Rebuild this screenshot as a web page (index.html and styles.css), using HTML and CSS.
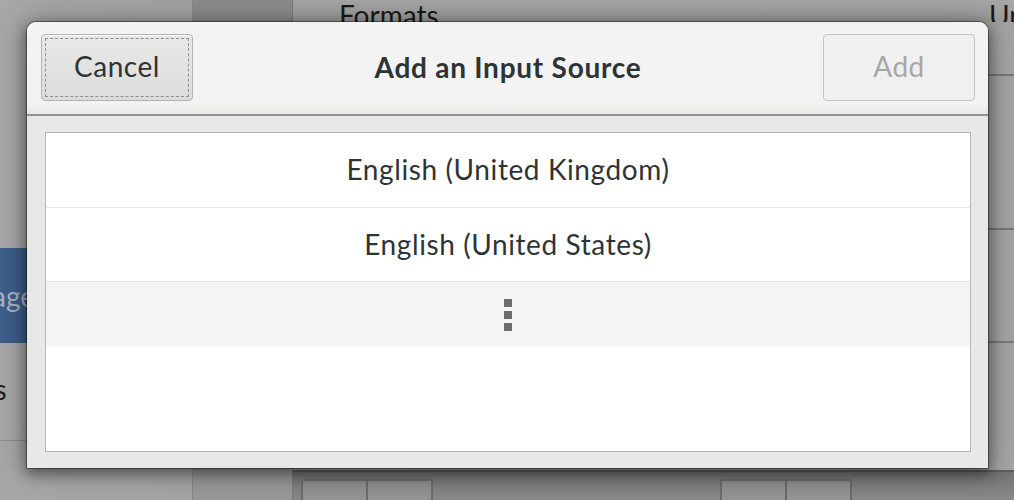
FILE: index.html
```html
<!DOCTYPE html>
<html>
<head>
<meta charset="utf-8">
<link rel="stylesheet" href="styles.css">
</head>
<body>
<div class="backdrop">
  <aside class="sidebar">
    <div class="side-top"></div>
    <div class="side-row side-gap"></div>
    <div class="side-row side-selected"><span class="side-label sel-label">Language</span></div>
    <div class="side-row side-plain"><span class="side-label plain-label">Formats</span></div>
    <div class="side-row side-rest"></div>
  </aside>
  <div class="midcol">
    <div class="mid-top"></div>
    <div class="mid-body"></div>
  </div>
  <main class="main">
    <div class="main-head">
      <span class="head-title">Formats</span>
      <span class="head-title">Units</span>
    </div>
    <div class="main-rows">
      <div class="main-row r1"></div>
      <div class="main-row r2"></div>
      <div class="main-row r3"></div>
      <div class="main-row r4"></div>
    </div>
    <div class="main-foot">
      <div class="btn-group"><span class="bg-btn"></span><span class="bg-btn"></span></div>
      <div class="btn-group"><span class="bg-btn"></span><span class="bg-btn"></span></div>
    </div>
  </main>
</div>

<div class="dialog">
  <header class="dlg-header">
    <button class="btn btn-cancel">Cancel</button>
    <h1 class="dlg-title">Add an Input Source</h1>
    <button class="btn btn-add" disabled>Add</button>
  </header>
  <div class="dlg-body">
    <div class="list">
      <div class="list-row row-first">English (United Kingdom)</div>
      <div class="list-row">English (United States)</div>
      <div class="list-more">
        <span class="dot"></span><span class="dot"></span><span class="dot"></span>
      </div>
    </div>
  </div>
</div>
</body>
</html>
```

FILE: styles.css
```css
* { box-sizing: border-box; }
html, body {
  margin: 0;
  padding: 0;
  width: 1014px;
  height: 500px;
  overflow: hidden;
}
body {
  position: relative;
  font-family: Lato, "Open Sans", "DejaVu Sans", sans-serif;
  background: #9d9d9d;
}

/* ---------- backdrop window (dimmed) ---------- */
.backdrop {
  display: grid;
  grid-template-columns: 193px 100px 1fr;
  height: 500px;
  background: linear-gradient(90deg, #a9a9a9 0%, #a2a2a2 50%, #a6a6a6 100%);
}
.sidebar {
  display: flex;
  flex-direction: column;
  border-right: 1px solid #8a8a8a;
  overflow: hidden;
}
.side-top { height: 22px; }
.side-gap { height: 226px; }
.side-selected {
  height: 95px;
  background: #3e5f8d;
  display: flex;
  align-items: center;
}
.side-label {
  font-size: 28px;
  white-space: nowrap;
}
.sel-label {
  color: #aab6c6;
  margin-left: -82px;
}
.side-plain {
  height: 98px;
  display: flex;
  align-items: center;
  border-bottom: 1px solid #8e8e8e;
  padding-bottom: 6px;
}
.plain-label {
  color: #1c1c1c;
  margin-left: -93px;
}
.side-rest { flex: 1; }

.midcol {
  display: flex;
  flex-direction: column;
  border-right: 1px solid #7d7d7d;
  background: linear-gradient(180deg, #8e8e8e 0%, #9a9a9a 100%);
}
.mid-top { height: 22px; }
.mid-body { flex: 1; }

.main {
  display: flex;
  flex-direction: column;
  min-width: 0;
}
.main-head {
  height: 22px;
  display: grid;
  grid-template-columns: 650px 1fr;
  padding-left: 46px;
  overflow: hidden;
  background: linear-gradient(180deg, #a9a9a9, #9f9f9f);
}
.head-title {
  font-size: 28px;
  line-height: 1;
  padding-top: 1px;
  color: #1a1a1a;
  white-space: nowrap;
}
.main-rows {
  display: flex;
  flex-direction: column;
}
.main-row { border-bottom: 2px solid #7b7b7b; }
.r1 { height: 54px; }
.r2 { height: 154px; }
.r3 { height: 113px; }
.r4 { height: 129px; border-bottom: 2px solid #5e5e5e; }
.main-foot {
  flex: 1;
  display: flex;
  gap: 287px;
  padding: 7px 0 0 8px;
  background: linear-gradient(180deg, #747474, #939393);
}
.btn-group {
  display: flex;
  border: 2px solid #6c6c6c;
  border-bottom: none;
  border-radius: 3px 3px 0 0;
  height: 30px;
}
.bg-btn {
  width: 63px;
  background: linear-gradient(180deg, #8d8d8d, #9c9c9c);
}
.bg-btn + .bg-btn { border-left: 2px solid #6c6c6c; width: 65px; }

/* ---------- dialog (modal over the backdrop) ---------- */
.dialog {
  position: absolute;
  left: 27px;
  top: 22px;
  width: 961px;
  height: 446px;
  display: flex;
  flex-direction: column;
  background: #e8e8e7;
  border-radius: 9px 9px 0 0;
  box-shadow: 0 0 0 1px rgba(0, 0, 0, 0.38),
              0 4px 14px 2px rgba(0, 0, 0, 0.45),
              0 0 40px 6px rgba(0, 0, 0, 0.18);
  overflow: hidden;
}
.dlg-header {
  height: 94px;
  flex: none;
  display: grid;
  grid-template-columns: 152px 1fr 152px;
  align-items: center;
  padding: 0 13px 2px 14px;
  background: linear-gradient(180deg, #f3f3f3 0%, #f3f3f3 90%, #e9e9e8 100%);
  border-bottom: 2px solid #919190;
}
.dlg-title {
  margin: 0;
  text-align: center;
  font-size: 28px;
  font-weight: 700;
  color: #2e3436;
  letter-spacing: 0.75px;
}
.btn {
  height: 67px;
  font-family: inherit;
  font-size: 28px;
  letter-spacing: 0.5px;
  border-radius: 4px;
  padding: 0 0 2px;
}
.btn-cancel {
  color: #2e3436;
  border: 1px solid #b3b3b0;
  background: linear-gradient(180deg, #e9e9e8 0%, #dcdcda 100%);
  box-shadow: inset 0 1px rgba(255, 255, 255, 0.8);
  outline: 1px dashed #8e8e8c;
  outline-offset: -5px;
}
.btn-add {
  color: #a5a7a7;
  border: 1px solid #c3c3c0;
  background: #f0f0ef;
}

.dlg-body {
  flex: 1;
  padding: 16px 17px 16px 18px;
  display: flex;
}
.list {
  flex: 1;
  background: #ffffff;
  border: 1px solid #b5b5b2;
  display: flex;
  flex-direction: column;
}
.list-row {
  height: 74px;
  flex: none;
  display: flex;
  align-items: center;
  justify-content: center;
  font-size: 28px;
  letter-spacing: 0.6px;
  color: #2e3436;
  border-bottom: 1px solid #e5e5e5;
  padding-bottom: 2px;
}
.row-first { height: 75px; }
.list-more {
  height: 65px;
  flex: none;
  background: #f4f4f4;
  display: flex;
  flex-direction: column;
  align-items: center;
  justify-content: center;
  gap: 4px;
}
.dot {
  width: 8px;
  height: 8px;
  background: #6d6d6d;
}
```
